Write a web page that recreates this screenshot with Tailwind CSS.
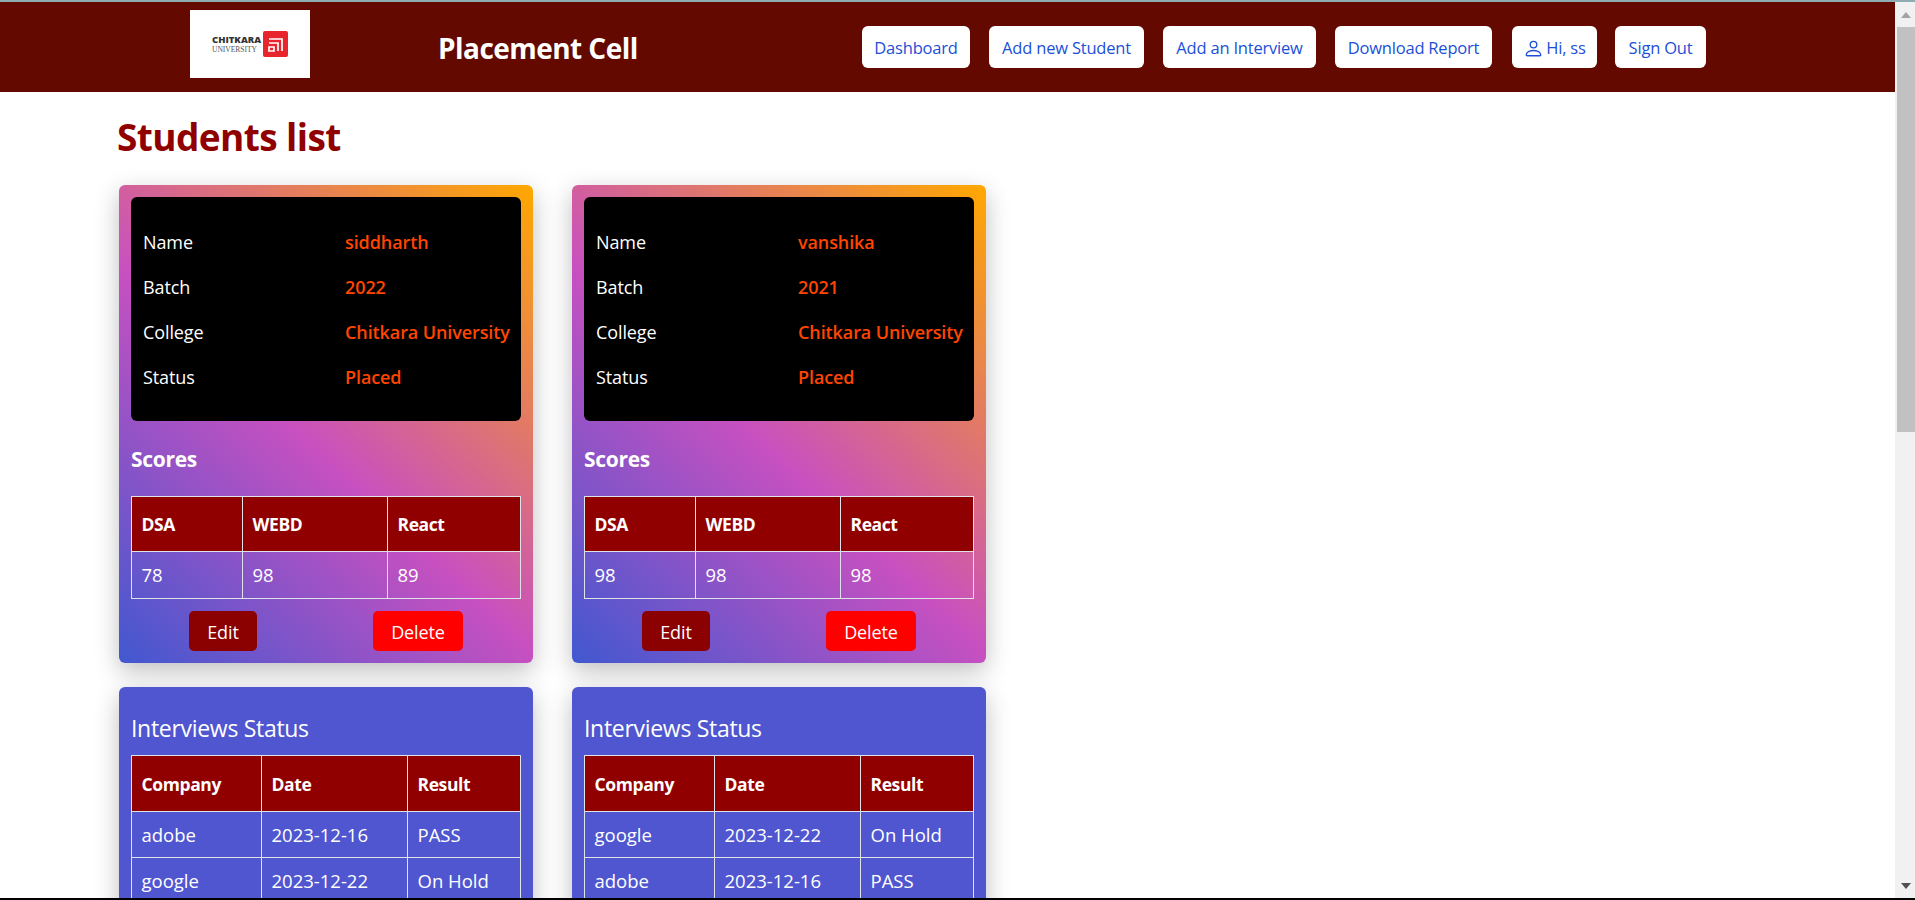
<!DOCTYPE html>
<html lang="en">

<head>
    <meta charset="UTF-8">
    <title>Placement Cell</title>
    <script src="https://cdn.jsdelivr.net/npm/@tailwindcss/browser@4"></script>
</head>

<body class="h-[900px] overflow-hidden bg-white font-['Open_Sans',sans-serif] text-black">
    <div class="h-[2px] bg-[#8fabb3]"></div>

    <div class="flex h-[896px]">
        <div class="w-[1895px] overflow-hidden">
            <header class="flex h-[90px] items-center bg-[#640900]">
                <div class="ml-[190px] -mt-[6px] flex h-[68px] w-[120px] shrink-0 items-center justify-center gap-[3px] bg-white">
                    <div class="w-[48px] leading-none">
                        <div class="text-[9.5px] font-extrabold text-[#333]">CHITKARA</div>
                        <div class="mt-[1px] font-['Liberation_Serif',serif] text-[7.5px] text-[#555]">UNIVERSITY</div>
                    </div>
                    <svg class="h-[26px] w-[25px]" viewBox="0 0 25 26">
                        <rect width="25" height="26" rx="2" fill="#e8242c" />
                        <path d="M6 8h13v12M6 12h9v8M6 16h5v4H6z" fill="none" stroke="#fff" stroke-width="1.7" />
                    </svg>
                </div>
                <div class="ml-[128px] w-[424px] shrink-0 pt-[2px] text-[28px] font-bold tracking-[-0.55px] text-white">Placement Cell</div>
                <nav class="flex gap-5 text-[16.5px] tracking-[-0.2px] text-[#1b4fd8]">
                    <a class="flex h-[42px] w-[108px] items-center justify-center rounded-[6px] bg-white pt-[2px]">Dashboard</a>
                    <a class="-ml-[1px] flex h-[42px] w-[155px] items-center justify-center rounded-[6px] bg-white pt-[2px]">Add new Student</a>
                    <a class="-ml-[1px] flex h-[42px] w-[153px] items-center justify-center rounded-[6px] bg-white pt-[2px]">Add an Interview</a>
                    <a class="-ml-[1px] flex h-[42px] w-[157px] items-center justify-center rounded-[6px] bg-white pt-[2px]">Download Report</a>
                    <a class="flex h-[42px] w-[85px] items-center justify-center gap-[2px] rounded-[6px] bg-white pt-[2px]">
                        <svg class="h-[21px] w-[21px]" viewBox="0 0 16 16" fill="currentColor">
                            <path d="M8 8a3 3 0 1 0 0-6 3 3 0 0 0 0 6Zm2-3a2 2 0 1 1-4 0 2 2 0 0 1 4 0Zm4 8c0 1-1 1-1 1H3s-1 0-1-1 1-4 6-4 6 3 6 4Zm-1-.004c-.001-.246-.154-.986-.832-1.664C11.516 10.68 10.289 10 8 10c-2.29 0-3.516.68-4.168 1.332-.678.678-.83 1.418-.832 1.664h10Z" />
                        </svg>
                        Hi, ss
                    </a>
                    <a class="-ml-[2px] flex h-[42px] w-[91px] items-center justify-center rounded-[6px] bg-white pt-[2px]">Sign Out</a>
                </nav>
            </header>

            <main class="pl-[119px]">
                <h1 class="-ml-[2px] pt-[20px] text-[37px] font-bold leading-[50px] tracking-[-0.6px] text-[#900000]">Students list</h1>
                <div id="students" class="mt-[23px] flex gap-[39px]"></div>
            </main>
        </div>

        <!-- scrollbar -->
        <div class="flex w-5 flex-col bg-[#f1f1f1]">
            <div class="flex h-[25px] items-center justify-center pl-[2px]">
                <div class="border-x-[5px] border-b-[6px] border-x-transparent border-b-[#a3a3a3]"></div>
            </div>
            <div class="ml-[2px] h-[405px] bg-[#c1c1c1]"></div>
            <div class="flex-1"></div>
            <div class="flex h-[25px] items-center justify-center pl-[2px]">
                <div class="border-x-[5px] border-t-[6px] border-x-transparent border-t-[#505050]"></div>
            </div>
        </div>
    </div>

    <div class="h-[2px] bg-black"></div>

    <script>
        const students = [
            {
                name: 'siddharth', batch: 2022, college: 'Chitkara University', status: 'Placed',
                scores: [78, 98, 89],
                interviews: [['adobe', '2023-12-16', 'PASS'], ['google', '2023-12-22', 'On Hold']]
            },
            {
                name: 'vanshika', batch: 2021, college: 'Chitkara University', status: 'Placed',
                scores: [98, 98, 98],
                interviews: [['google', '2023-12-22', 'On Hold'], ['adobe', '2023-12-16', 'PASS']]
            }
        ];

        function infoRow(label, value) {
            return `
                <div class="flex h-[45px] items-center">
                    <span class="w-[202px] text-white">${label}</span>
                    <span class="font-semibold text-[#ff4500]">${value}</span>
                </div>`;
        }

        function renderStudent(s) {
            return `
            <div class="w-[414px]">
                <div class="h-[478px] rounded-[6px] bg-[linear-gradient(43deg,#4158d0_0%,#c850c0_46%,#ffa800_100%)] p-3 shadow-[0_8px_24px_rgba(0,0,0,0.25)]">
                    <div class="flex h-[224px] flex-col justify-center rounded-[6px] bg-black pb-[2px] pl-3 pt-[3px] text-[18px] tracking-[-0.1px]">
                        ${infoRow('Name', s.name)}
                        ${infoRow('Batch', s.batch)}
                        ${infoRow('College', s.college)}
                        ${infoRow('Status', s.status)}
                    </div>
                    <h3 class="mt-[24px] h-[51px] text-[21px] font-bold leading-[28px] tracking-[-0.3px] text-white">Scores</h3>
                    <table class="w-[390px] table-fixed border-collapse text-left text-[18.5px] text-white">
                        <tr class="h-[55px] bg-[#900000] text-[17.5px] tracking-[-0.4px]">
                            <th class="w-[111px] border border-[#dfe2e6] px-[9.5px] pt-[1px] font-bold">DSA</th>
                            <th class="w-[145px] border border-[#dfe2e6] px-[9.5px] pt-[1px] font-bold">WEBD</th>
                            <th class="border border-[#dfe2e6] px-[9.5px] pt-[1px] font-bold">React</th>
                        </tr>
                        <tr class="h-[47px]">
                            ${s.scores.map(n => `<td class="border border-[#dfe2e6] px-[9.5px]">${n}</td>`).join('')}
                        </tr>
                    </table>
                    <div class="mt-[12px] flex text-[18px] tracking-[-0.1px] text-white">
                        <button class="ml-[58px] h-[40px] w-[68px] rounded-[5px] bg-[#8b0000] pt-[2px]">Edit</button>
                        <button class="ml-[116px] h-[40px] w-[90px] rounded-[5px] bg-[#ff0000] pt-[2px]">Delete</button>
                    </div>
                </div>

                <div class="mt-[24px] h-[400px] rounded-[6px] bg-[#4f56cf] p-3 pt-[23px] shadow-[0_8px_24px_rgba(0,0,0,0.25)]">
                    <h4 class="h-[45px] text-[23px] leading-[36px] tracking-[-0.3px] text-white">Interviews Status</h4>
                    <table class="w-[390px] table-fixed border-collapse text-left text-[18.5px] text-white">
                        <tr class="h-[56px] bg-[#900000] text-[17.5px] tracking-[-0.4px]">
                            <th class="w-[130px] border border-[#dfe2e6] px-[9.5px] pt-[1px] font-bold">Company</th>
                            <th class="w-[146px] border border-[#dfe2e6] px-[9.5px] pt-[1px] font-bold">Date</th>
                            <th class="border border-[#dfe2e6] px-[9.5px] pt-[1px] font-bold">Result</th>
                        </tr>
                        ${s.interviews.map(row => `
                        <tr class="h-[46px]">
                            ${row.map(c => `<td class="border border-[#dfe2e6] px-[9.5px]">${c}</td>`).join('')}
                        </tr>`).join('')}
                    </table>
                </div>
            </div>`;
        }

        document.getElementById('students').innerHTML = students.map(renderStudent).join('');
    </script>
</body>

</html>
